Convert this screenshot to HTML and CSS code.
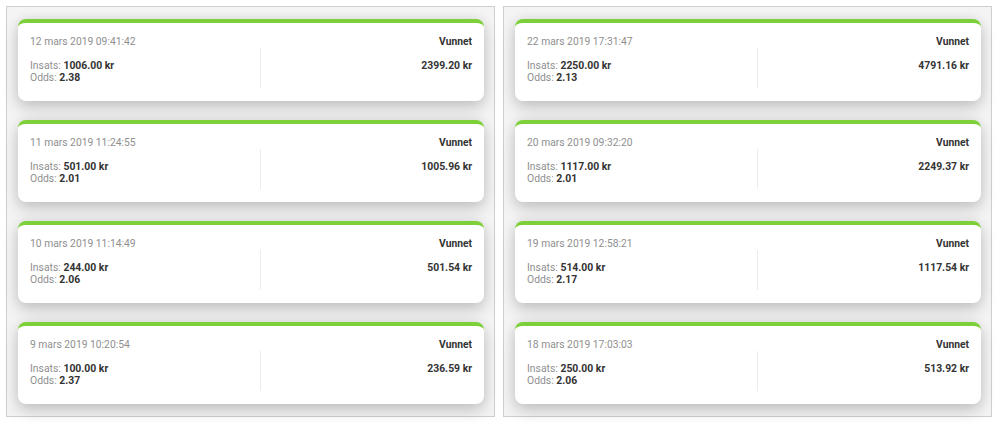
FILE: index.html
```html
<!DOCTYPE html>
<html>
<head>
<meta charset="utf-8">
<link rel="stylesheet" href="styles.css">
</head>
<body>
<div class="wrap">
  <div class="panel">
    <div class="card">
      <div class="head"><span class="date">12 mars 2019 09:41:42</span><span class="status">Vunnet</span></div>
      <div class="row"><div class="left"><div><span class="lbl">Insats:</span> <b>1006.00 kr</b></div><div><span class="lbl">Odds:</span> <b>2.38</b></div></div><div class="right"><b>2399.20 kr</b></div></div>
    </div>
    <div class="card">
      <div class="head"><span class="date">11 mars 2019 11:24:55</span><span class="status">Vunnet</span></div>
      <div class="row"><div class="left"><div><span class="lbl">Insats:</span> <b>501.00 kr</b></div><div><span class="lbl">Odds:</span> <b>2.01</b></div></div><div class="right"><b>1005.96 kr</b></div></div>
    </div>
    <div class="card">
      <div class="head"><span class="date">10 mars 2019 11:14:49</span><span class="status">Vunnet</span></div>
      <div class="row"><div class="left"><div><span class="lbl">Insats:</span> <b>244.00 kr</b></div><div><span class="lbl">Odds:</span> <b>2.06</b></div></div><div class="right"><b>501.54 kr</b></div></div>
    </div>
    <div class="card">
      <div class="head"><span class="date">9 mars 2019 10:20:54</span><span class="status">Vunnet</span></div>
      <div class="row"><div class="left"><div><span class="lbl">Insats:</span> <b>100.00 kr</b></div><div><span class="lbl">Odds:</span> <b>2.37</b></div></div><div class="right"><b>236.59 kr</b></div></div>
    </div>
  </div>
  <div class="panel">
    <div class="card">
      <div class="head"><span class="date">22 mars 2019 17:31:47</span><span class="status">Vunnet</span></div>
      <div class="row"><div class="left"><div><span class="lbl">Insats:</span> <b>2250.00 kr</b></div><div><span class="lbl">Odds:</span> <b>2.13</b></div></div><div class="right"><b>4791.16 kr</b></div></div>
    </div>
    <div class="card">
      <div class="head"><span class="date">20 mars 2019 09:32:20</span><span class="status">Vunnet</span></div>
      <div class="row"><div class="left"><div><span class="lbl">Insats:</span> <b>1117.00 kr</b></div><div><span class="lbl">Odds:</span> <b>2.01</b></div></div><div class="right"><b>2249.37 kr</b></div></div>
    </div>
    <div class="card">
      <div class="head"><span class="date">19 mars 2019 12:58:21</span><span class="status">Vunnet</span></div>
      <div class="row"><div class="left"><div><span class="lbl">Insats:</span> <b>514.00 kr</b></div><div><span class="lbl">Odds:</span> <b>2.17</b></div></div><div class="right"><b>1117.54 kr</b></div></div>
    </div>
    <div class="card">
      <div class="head"><span class="date">18 mars 2019 17:03:03</span><span class="status">Vunnet</span></div>
      <div class="row"><div class="left"><div><span class="lbl">Insats:</span> <b>250.00 kr</b></div><div><span class="lbl">Odds:</span> <b>2.06</b></div></div><div class="right"><b>513.92 kr</b></div></div>
    </div>
  </div>
</div>
</body>
</html>
```
FILE: styles.css
```css
html, body {
  margin: 0;
  padding: 0;
  background: #fff;
}
body {
  font-family: Roboto, "Liberation Sans", sans-serif;
  color: #333;
}
.wrap {
  display: flex;
  gap: 8px;
  padding: 6px;
}
.panel {
  width: 489px;
  border: 1px solid #cfcfcf;
  background: #f4f4f4;
  padding: 12px 10px 12px 11px;
  display: flex;
  flex-direction: column;
  gap: 19px;
  box-sizing: border-box;
}
.card {
  height: 82px;
  box-sizing: border-box;
  background: #fff;
  border-top: 4px solid #7ed03a;
  border-radius: 8px;
  padding: 11px 12px 13px 12px;
  box-shadow: 0 7px 16px rgba(0,0,0,0.18), 0 0 12px rgba(0,0,0,0.08);
}
.head {
  display: flex;
  justify-content: space-between;
  align-items: center;
  height: 14px;
}
.date {
  color: #8f8f8f;
  font-size: 10.3px;
}
.status {
  font-weight: 700;
  font-size: 10.3px;
  color: #333;
}
.row {
  display: flex;
  height: 40px;
}
.left {
  width: 231px;
  padding-top: 12px;
  font-size: 10.4px;
  line-height: 12px;
  border-right: 1px solid #ececec;
  box-sizing: border-box;
}
.lbl {
  color: #8f8f8f;
}
.left b, .right b {
  font-weight: 700;
  color: #333;
}
.right {
  flex: 1;
  text-align: right;
  padding-top: 12px;
  font-size: 10.4px;
  line-height: 12px;
}
```
